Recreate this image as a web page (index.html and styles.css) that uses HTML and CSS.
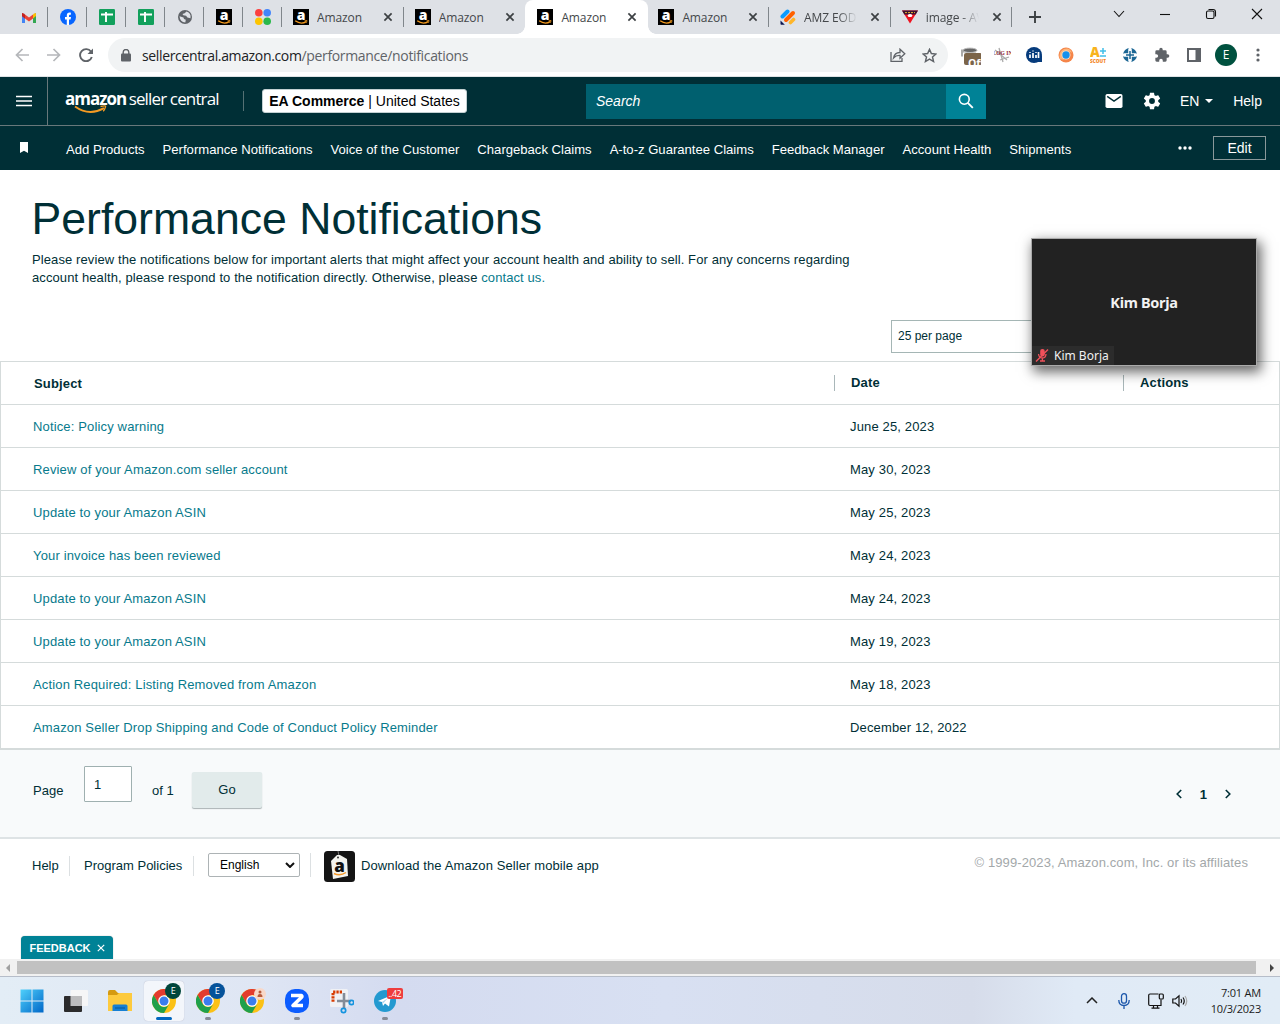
FILE: index.html
```html
<!DOCTYPE html>
<html lang="en">
<head>
<meta charset="utf-8">
<title>Performance Notifications</title>
<link rel="stylesheet" href="styles.css">
</head>
<body>
<svg class="defs" width="0" height="0">
  <symbol id="amz" viewBox="0 0 16 16"><rect width="16" height="16" fill="#000"/><text x="8" y="11" text-anchor="middle" font-family="Open Sans, sans-serif" font-weight="800" font-size="14" fill="#fff">a</text><path d="M2.2 11.8Q8 15.9 13.2 12.6" fill="none" stroke="#f29a1f" stroke-width="1.3"/><path d="M11.6 11.8l2.4-.3-.5 2.2" fill="none" stroke="#f29a1f" stroke-width=".8"/></symbol>
  <symbol id="sheet" viewBox="0 0 16 16"><rect width="16" height="16" rx="1.2" fill="#12a05c"/><path d="M2 5.5h12M7 3v10" stroke="#fff" stroke-width="1.9"/></symbol>
  <symbol id="close" viewBox="0 0 10 10"><path d="M1.4 1.4l7.2 7.2M8.6 1.4L1.4 8.6" stroke="#3c4043" stroke-width="1.7"/></symbol>
  <symbol id="chrome" viewBox="0 0 24 24"><circle cx="12" cy="12" r="12" fill="#fbc116"/><path d="M1.6 6A12 12 0 0 1 22.4 6H12L6.8 15z" fill="#e33b2e"/><path d="M1.6 6A12 12 0 0 0 12 24l5.2-9A6 6 0 0 1 6.8 15z" fill="#1fa04b"/><circle cx="12" cy="12" r="5.8" fill="#fff"/><circle cx="12" cy="12" r="4.5" fill="#3b7ded"/></symbol>
</svg>

<div class="tabs">
  <div class="pin"><svg width="16" height="12" viewBox="0 0 16 12"><path d="M1 2v10h3V5z" fill="#4285f4"/><path d="M15 2v10h-3V5z" fill="#34a853"/><path d="M1 2.2L4 4.5V7.4L1 5z" fill="#c5221f"/><path d="M4 3.5l4 3 4-3v4l-4 3-4-3z" fill="#ea4335"/><path d="M12 3.5l1.3-1Q15 1.500 15 3v2l-3 2.400z" fill="#fbbc04"/><path d="M1 5V3q0-1.500 1.700-.5L4 3.500v3.900z" fill="#c5221f"/></svg></div>
  <div class="pin"><svg width="16" height="16" viewBox="0 0 16 16"><circle cx="8" cy="8" r="8" fill="#0866ff"/><path d="M6.800 16v-5.500H5V8h1.800V6.600c0-2.300 1.300-3.400 4.100-2.900v2c-1.500-.2-1.900.2-1.900 1.200V8h2l-.4 2.500H9V16z" fill="#fff"/></svg></div>
  <div class="pin"><svg width="16" height="16"><use href="#sheet"/></svg></div>
  <div class="pin"><svg width="16" height="16"><use href="#sheet"/></svg></div>
  <div class="pin"><svg width="14" height="14" viewBox="0 0 14 14"><circle cx="7" cy="7" r="7" fill="#5f6368"/><path d="M1.500 6.200l4 1.200.5 1.600 1.800.8-.5 2.700Q2 12 1.500 6.200zM8.500 1.600L6.700 3.200 4.500 4l.8 1.300 2.800.4 1.300 1.800 3.100.8Q13.400 3 8.500 1.600z" fill="#dee1e6"/></svg></div>
  <div class="pin"><svg width="16" height="16"><use href="#amz"/></svg></div>
  <div class="pin"><svg width="16" height="16" viewBox="0 0 16 16"><circle cx="3.800" cy="3.800" r="3.800" fill="#fb4040"/><circle cx="12.200" cy="3.800" r="3.800" fill="#4385fb"/><circle cx="3.800" cy="12.200" r="3.800" fill="#fdc500"/><circle cx="12.200" cy="12.200" r="3.800" fill="#2bb84b"/></svg></div>
  <div class="tab"><svg width="16" height="16"><use href="#amz"/></svg><span>Amazon</span><svg class="x" width="10" height="10"><use href="#close"/></svg></div>
  <div class="tab nosep"><svg width="16" height="16"><use href="#amz"/></svg><span>Amazon</span><svg class="x" width="10" height="10"><use href="#close"/></svg></div>
  <div class="tab active"><svg width="16" height="16"><use href="#amz"/></svg><span>Amazon</span><svg class="x" width="10" height="10"><use href="#close"/></svg></div>
  <div class="tab"><svg width="16" height="16"><use href="#amz"/></svg><span>Amazon</span><svg class="x" width="10" height="10"><use href="#close"/></svg></div>
  <div class="tab"><svg width="16" height="16" viewBox="0 0 16 16"><path d="M2.500 7.500l5-5" stroke="#0a9bff" stroke-width="4" stroke-linecap="round"/><path d="M6 11l7-7" stroke="#ff6100" stroke-width="4" stroke-linecap="round"/><path d="M10.500 13.500l3-3" stroke="#ffb629" stroke-width="3.600" stroke-linecap="round"/><path d="M.5 11.500V15q0 .8.800.8h3.500z" fill="#0a1551"/></svg><span class="fade">AMZ EOD</span><svg class="x" width="10" height="10"><use href="#close"/></svg></div>
  <div class="tab"><svg width="16" height="16" viewBox="0 0 16 16"><path d="M0 1.500h16L8 14.500z" fill="#ee1320"/><path d="M0 1.500h16l-2.300 4H2.300z" fill="#3d1131"/><path d="M3 3.600h10" stroke="#e7b52e" stroke-dasharray="2 1"/><path d="M5.500 6.200Q8 4 10.500 6.200L9.500 8h-3z" fill="#fff"/></svg><span class="fade">image - AV</span><svg class="x" width="10" height="10"><use href="#close"/></svg></div>
  <svg class="plus" width="12" height="12" viewBox="0 0 12 12"><path d="M6 0v12M0 6h12" stroke="#3c4043" stroke-width="1.900"/></svg>
  <div class="winbtns">
    <svg width="12" height="12" viewBox="0 0 12 12"><path d="M1 3l5 5.500L11 3"/></svg>
    <svg width="12" height="12" viewBox="0 0 12 12"><path d="M1 6.500h10"/></svg>
    <svg width="12" height="12" viewBox="0 0 12 12"><rect x="1.500" y="3" width="7.500" height="7.500" rx="1.500"/><path d="M3.500 1.500H8q2.500 0 2.500 2.500v4.500"/></svg>
    <svg width="12" height="12" viewBox="0 0 12 12"><path d="M1 1l10 10M11 1L1 11"/></svg>
  </div>
</div>

<div class="toolbar">
  <div class="navs">
    <svg width="14" height="14" viewBox="0 0 14 14" fill="none" stroke="#b5b7ba" stroke-width="1.700"><path d="M14 7H1.500M7.500 1L1.500 7l6 6"/></svg>
    <svg width="14" height="14" viewBox="0 0 14 14" fill="none" stroke="#b5b7ba" stroke-width="1.700"><path d="M0 7h12.500M6.500 1l6 6-6 6"/></svg>
    <svg width="14" height="14" viewBox="0 0 14 14" fill="none" stroke="#5f6368" stroke-width="1.900"><path d="M12 3.700A6 6 0 1 0 12.800 9"/><path d="M14 .5V6H8.500z" fill="#5f6368" stroke="none"/></svg>
  </div>
  <div class="omnibox">
    <svg width="10" height="13" viewBox="0 0 10 13"><rect x="0" y="4.500" width="10" height="8" rx="1" fill="#5f6368"/><path d="M2.200 5V3.300a2.800 2.800 0 0 1 5.600 0V5" fill="none" stroke="#5f6368" stroke-width="1.400"/></svg>
    <span class="url">sellercentral.amazon.com<i>/performance/notifications</i></span>
    <svg class="share" width="16" height="14" viewBox="0 0 16 14" fill="none" stroke="#5f6368" stroke-width="1.300"><path d="M1 4v9.300h11V10"/><path d="M3.500 10Q4.500 4.500 10 4.500V1.200l4.800 4.600L10 10.200V7.500Q6 7.200 3.500 10z"/></svg>
    <svg width="15" height="15" viewBox="0 0 24 24" fill="none" stroke="#5f6368" stroke-width="2.300"><path d="M12 2.200l3 6.700 7.300.7-5.500 4.800 1.700 7.200-6.500-3.800-6.500 3.800 1.700-7.200L1.700 9.600 9 8.900z"/></svg>
  </div>
  <div class="exts">
    <div class="ext"><svg width="22" height="20" viewBox="0 0 22 20"><path d="M2 4.500h15v3H4v4H2z" fill="#aaa"/><ellipse cx="11" cy="5.300" rx="7" ry="2.200" fill="#666" stroke="#bbb"/><rect x="5" y="8" width="18" height="12" rx="2" fill="#7b6449"/></svg><b class="off">Off</b></div>
    <div class="ext"><svg width="17" height="17" viewBox="0 0 17 17"><path d="M5 1l4 14M1 3l12 10M6 13l9-3" stroke="#aaa" stroke-width="1.300"/><text x="8.500" y="8" text-anchor="middle" font-family="Liberation Serif, serif" font-weight="bold" font-size="5.500" fill="#8d2430">LOG IN</text></svg></div>
    <div class="ext"><svg width="16" height="16" viewBox="0 0 16 16"><circle cx="8" cy="8" r="8" fill="#063b7c"/><path d="M9 15h7v-7z" fill="#063b7c"/><path d="M4 7.500V11M7 6v5M10 8v3M12.500 5v6" stroke="#fff" stroke-width="1.700"/><path d="M4 5v1M7 3.500v1M10 5v1" stroke="#fff" stroke-width="1.400"/></svg></div>
    <div class="ext"><svg width="16" height="16" viewBox="0 0 16 16"><circle cx="8" cy="8" r="7.500" fill="#f58549"/><path d="M2 12Q0 5 6 2q6-2 8 4Q8 2 5 6q-2 3 1 7z" fill="#fcb57a"/><circle cx="8" cy="8" r="4.500" fill="#fbe2c6"/><circle cx="8" cy="8" r="3.700" fill="#1691ec"/></svg></div>
    <div class="ext"><svg width="16" height="16" viewBox="0 0 16 16"><text x="0" y="10" font-family="Open Sans, sans-serif" font-weight="800" font-size="13.500" fill="#f8b31d">A</text><path d="M10 4h6M13 1v6M10 9h6" stroke="#41bfe9" stroke-width="1.500"/><text x="0" y="15.500" textLength="16" lengthAdjust="spacingAndGlyphs" font-family="Open Sans, sans-serif" font-weight="800" font-size="5" fill="#f5881f">SCOUT</text></svg></div>
    <div class="ext"><svg width="16" height="16" viewBox="0 0 16 16"><circle cx="8" cy="8" r="7" fill="#1b6694"/><path d="M8 2.500v11M2.500 8h11" stroke="#fff" stroke-width="3.600" stroke-linecap="round"/><path d="M8 4v8M4 8h8" stroke="#1b6694" stroke-width="1.500"/></svg></div>
    <div class="ext"><svg width="16" height="16" viewBox="0 0 24 24" fill="#5f6368"><path d="M20.500 11H19V7a2 2 0 0 0-2-2h-4V3.500a2.500 2.500 0 0 0-5 0V5H4a2 2 0 0 0-2 2v3.800h1.500a2.700 2.700 0 0 1 0 5.400H2V20a2 2 0 0 0 2 2h3.800v-1.500a2.700 2.700 0 0 1 5.400 0V22H17a2 2 0 0 0 2-2v-4h1.500a2.500 2.500 0 0 0 0-5z"/></svg></div>
    <div class="ext"><svg width="14" height="14" viewBox="0 0 14 14"><rect x="1" y="1" width="12" height="12" fill="none" stroke="#5f6368" stroke-width="2"/><rect x="8.500" y="1" width="5" height="12" fill="#5f6368"/></svg></div>
    <div class="ext"><span class="avatar">E</span></div>
    <div class="ext"><svg width="4" height="14" viewBox="0 0 4 14" fill="#5f6368"><circle cx="2" cy="2" r="1.600"/><circle cx="2" cy="7" r="1.600"/><circle cx="2" cy="12" r="1.600"/></svg></div>
  </div>
</div>

<header class="top">
  <div class="burger"><svg width="16" height="12" viewBox="0 0 16 12"><path d="M0 1.500h16M0 6h16M0 10.500h16" stroke="#fff" stroke-width="1.700"/></svg></div>
  <div class="logo"><span><b>amazon</b> <em>seller central</em></span><svg class="smile" width="34" height="9" viewBox="0 0 34 9"><path d="M1 1.500Q15 11.500 30 3.200" fill="none" stroke="#f59b23" stroke-width="1.900"/><path d="M26.500 1.500q6-1.300 5 .4-.6 2.600-2.300 4.300" fill="none" stroke="#f59b23" stroke-width="1.300"/></svg></div>
  <div class="account"><b>EA Commerce</b> | United States</div>
  <div class="search"><span>Search</span><div class="go"><svg width="16" height="16" viewBox="0 0 16 16" fill="none" stroke="#fff"><circle cx="6.300" cy="6.300" r="4.900" stroke-width="1.600"/><path d="M9.800 9.800l5 5" stroke-width="1.900"/></svg></div></div>
  <div class="tools">
    <svg width="18" height="14" viewBox="0 0 18 14"><rect x=".5" width="17" height="14" rx="1.700" fill="#fff"/><path d="M2.200 2.300L9 7l6.800-4.700" fill="none" stroke="#002f36" stroke-width="1.500"/></svg>
    <svg class="gear" width="20" height="20" viewBox="0 0 24 24"><path fill="#fff" d="M19.430 12.980c.04-.32.070-.64.070-.98s-.03-.66-.07-.98l2.110-1.650c.19-.15.240-.42.120-.64l-2-3.460c-.12-.22-.39-.3-.61-.22l-2.490 1c-.52-.4-1.080-.73-1.690-.98l-.38-2.650C14.460 2.180 14.250 2 14 2h-4c-.25 0-.46.18-.49.42l-.38 2.650c-.61.250-1.170.590-1.690.980l-2.490-1c-.23-.09-.49 0-.61.220l-2 3.460c-.13.220-.07.490.120.640l2.110 1.650c-.04.320-.07.650-.07.980s.03.660.070.980l-2.110 1.650c-.19.150-.24.420-.12.640l2 3.460c.12.220.390.300.610.220l2.490-1c.52.400 1.080.730 1.690.980l.38 2.650c.03.240.240.420.490.420h4c.25 0 .460-.18.490-.42l.38-2.650c.61-.25 1.170-.59 1.690-.98l2.490 1c.23.090.490 0 .610-.22l2-3.460c.12-.22.070-.49-.12-.64l-2.110-1.650zM12 15.500a3.500 3.500 0 1 1 0-7 3.500 3.500 0 0 1 0 7z"/></svg>
    <span class="lang">EN</span><svg class="caret" width="8" height="4" viewBox="0 0 8 4"><path d="M0 0h8L4 4z" fill="#fff"/></svg>
    <span class="help">Help</span>
  </div>
</header>

<nav class="favs">
  <svg class="mark" width="8" height="11" viewBox="0 0 8 11"><path d="M0 0h8v11L4 8.800 0 11z" fill="#fff"/></svg>
  <a>Add Products</a><a>Performance Notifications</a><a>Voice of the Customer</a><a>Chargeback Claims</a><a>A-to-z Guarantee Claims</a><a>Feedback Manager</a><a>Account Health</a><a>Shipments</a>
  <svg class="dots" width="14" height="4" viewBox="0 0 14 4" fill="#fff"><circle cx="2" cy="2" r="1.700"/><circle cx="7" cy="2" r="1.700"/><circle cx="12" cy="2" r="1.700"/></svg>
  <button class="edit">Edit</button>
</nav>

<main>
  <h1>Performance Notifications</h1>
  <p class="intro">Please review the notifications below for important alerts that might affect your account health and ability to sell. For any concerns regarding<br>account health, please respond to the notification directly. Otherwise, please <a>contact us.</a></p>
  <div class="perpage">25 per page</div>
  <div class="table">
    <div class="row head"><span>Subject</span><span>Date</span><span>Actions</span></div>
    <div class="row"><a>Notice: Policy warning</a><span>June 25, 2023</span></div>
    <div class="row"><a>Review of your Amazon.com seller account</a><span>May 30, 2023</span></div>
    <div class="row"><a>Update to your Amazon ASIN</a><span>May 25, 2023</span></div>
    <div class="row"><a>Your invoice has been reviewed</a><span>May 24, 2023</span></div>
    <div class="row"><a>Update to your Amazon ASIN</a><span>May 24, 2023</span></div>
    <div class="row"><a>Update to your Amazon ASIN</a><span>May 19, 2023</span></div>
    <div class="row"><a>Action Required: Listing Removed from Amazon</a><span>May 18, 2023</span></div>
    <div class="row"><a>Amazon Seller Drop Shipping and Code of Conduct Policy Reminder</a><span>December 12, 2022</span></div>
  </div>
  <div class="pager">
    <span class="pg">Page</span><div class="num">1</div><span class="of">of 1</span><div class="gobtn">Go</div>
    <div class="pages">
      <svg width="6" height="10" viewBox="0 0 6 10"><path d="M5.200 1L1.200 5l4 4"/></svg><b>1</b><svg width="6" height="10" viewBox="0 0 6 10"><path d="M.8 1l4 4-4 4"/></svg>
    </div>
  </div>
</main>

<footer>
  <span class="fhelp">Help</span><i class="fsep s1"></i><span class="fpol">Program Policies</span><i class="fsep s2"></i>
  <div class="langsel">English<svg width="10" height="6" viewBox="0 0 10 6"><path d="M1 1l4 4 4-4" fill="none" stroke="#111" stroke-width="2"/></svg></div>
  <i class="fsep s3"></i>
  <svg class="app" width="31" height="31" viewBox="0 0 31 31"><rect width="31" height="31" rx="3.500" fill="#141414"/><path d="M14 0l1 5" stroke="#777"/><path d="M7 10l6-6h3l7 4 1 17-15 3z" fill="#f4f4ef"/><circle cx="14" cy="6.500" r="1" fill="#333"/><text x="15.500" y="21" text-anchor="middle" font-family="Open Sans, sans-serif" font-weight="800" font-size="17" fill="#111">a</text><path d="M10 22.500q6 3 12-1" fill="none" stroke="#f5992a" stroke-width="1.500"/></svg>
  <span class="dl">Download the Amazon Seller mobile app</span>
  <span class="copy">© 1999-2023, Amazon.com, Inc. or its affiliates</span>
</footer>

<div class="fbrow"><div class="feedback">FEEDBACK<svg width="8" height="8" viewBox="0 0 8 8"><path d="M.8.800l6.400 6.400M7.200.800L.8 7.200" stroke="#fff" stroke-width="1.200"/></svg></div></div>
<div class="hscroll"><svg width="4" height="8" viewBox="0 0 4 8"><path d="M4 0v8L0 4z" fill="#a0a0a0"/></svg><div class="thumb"></div><svg width="4" height="8" viewBox="0 0 4 8"><path d="M0 0v8l4-4z" fill="#444"/></svg></div>

<div class="taskbar">
  <div class="task"><svg width="24" height="24" viewBox="0 0 24 24"><defs><linearGradient id="w" x2="1" y2="1"><stop stop-color="#4fd0fb"/><stop offset="1" stop-color="#0067c8"/></linearGradient></defs><path d="M.5.500h11v11H.5zM12.500.500h11v11h-11zM.5 12.500h11v11H.5zM12.500 12.500h11v11h-11z" fill="url(#w)"/></svg></div>
  <div class="task"><svg width="24" height="24" viewBox="0 0 24 24"><rect x="6.500" y="1" width="17.500" height="16" rx="1" fill="#f6f6f7"/><rect x="0" y="7" width="18" height="16" rx="1" fill="#2b2b2c"/><rect x="6.500" y="7" width="11.500" height="10" fill="#bcbcbe"/></svg></div>
  <div class="task"><svg width="26" height="24" viewBox="0 0 26 24"><path d="M1 3q0-2 2-2h5l3 3h12q2 0 2 2v6H1z" fill="#d59a10"/><path d="M1 6h9l2-2h13v18H1z" fill="#fdca3e"/><path d="M5.500 22v-5q0-1.500 1.500-1.500h12q1.500 0 1.500 1.500v5z" fill="#157fd4"/><path d="M8 19h10" stroke="#0b63ad" stroke-width="1.500"/></svg></div>
  <div class="task on"><svg width="24" height="24"><use href="#chrome"/></svg><span class="who green">E</span></div>
  <div class="task dot"><svg width="24" height="24"><use href="#chrome"/></svg><span class="who blue">E</span></div>
  <div class="task"><svg width="24" height="24"><use href="#chrome"/></svg><span class="who guest"><svg width="8" height="8" viewBox="0 0 8 8"><circle cx="4" cy="2" r="1.500" fill="#b65a3a"/><path d="M1.500 7q0-3 2.500-3t2.500 3z" fill="#b65a3a"/></svg></span></div>
  <div class="task dot"><svg width="24" height="24" viewBox="0 0 24 24"><rect width="24" height="24" rx="10" fill="#0b5cff"/><path d="M6 6.500h10.500q.8 1-.2 2L8 16.500h10" fill="none" stroke="#fff" stroke-width="3.600" stroke-linejoin="round"/></svg></div>
  <div class="task"><svg width="26" height="26" viewBox="0 0 26 26"><rect x="2" y="1" width="18" height="18" rx="1.500" fill="#f0f1f5"/><path d="M14 4H5v10" fill="none" stroke="#d83b01" stroke-width="3" stroke-dasharray="2.300 1"/><path d="M9 13h14M16 5v16" stroke="#838c98" stroke-width="2.600"/><circle cx="23.500" cy="14.500" r="2.200" fill="none" stroke="#1494df" stroke-width="1.700"/><circle cx="15.500" cy="22.500" r="2.200" fill="none" stroke="#1494df" stroke-width="1.700"/></svg></div>
  <div class="task dot"><svg width="22" height="22" viewBox="0 0 22 22"><circle cx="11" cy="11" r="11" fill="#2399d0"/><path d="M4 11l13-5.500-2 11-4-3-2 2.500-1-4z" fill="#fff"/><path d="M8 12l6-4-5 5.500z" fill="#a9d3ec"/></svg><span class="count">..42</span></div>
  <div class="tray">
    <svg width="12" height="7" viewBox="0 0 12 7"><path d="M1 6l5-5 5 5" fill="none" stroke="#222" stroke-width="1.500"/></svg>
    <svg class="mic" width="12" height="16" viewBox="0 0 12 16" fill="none" stroke="#1c57ab" stroke-width="1.300"><rect x="3.500" y=".7" width="5" height="9.500" rx="2.500"/><path d="M.8 7Q.8 12.500 6 12.500T11.200 7M6 12.500V16"/></svg>
    <svg class="mon" width="16" height="16" viewBox="0 0 16 16" fill="none" stroke="#111" stroke-width="1.200"><path d="M10.500 1H2Q.7 1 .7 2.300v9q0 1.200 1.300 1.200h11v-6M3.500 15.200h8M5.500 12.500v2.700M9.500 12.500v2.700"/><rect x="11.300" y="1" width="4" height="5" rx="1"/></svg>
    <svg class="spk" width="16" height="14" viewBox="0 0 16 14" fill="none" stroke="#111" stroke-width="1.200"><path d="M.8 5v4h2.700L7 12.200V1.800L3.500 5z"/><path d="M9 5q1.300 2 0 4M11 3.500q2.500 3.500 0 7"/><path d="M13 2q3.500 5 0 10" stroke="#aaa"/></svg>
    <div class="clock"><span>7:01 AM</span><span>10/3/2023</span></div>
  </div>
</div>

<div class="video"><b>Kim Borja</b><div class="name"><svg width="14" height="13" viewBox="0 0 14 13"><rect x="5.200" y="0" width="4.500" height="7.500" rx="2" fill="#f0505a"/><path d="M3.500 5Q4 9 7.400 9T11 5M7.400 9v3M5 12h5" fill="none" stroke="#f0505a" stroke-width="1.300"/><path d="M1 12.500L13 .5" stroke="#f0505a" stroke-width="1.400"/></svg><span>Kim Borja</span></div></div>
</body>
</html>
```
FILE: styles.css
```css
* { box-sizing: border-box; }
body { margin: 0; width: 1280px; height: 1024px; overflow: hidden; position: relative; background: #fff; display: flex; flex-direction: column; font: 13px "Liberation Sans", Arial, sans-serif; color: #002f36; }
.defs { position: absolute; }
svg { display: block; flex: none; }
body > * { flex: none; }

.tabs { height: 34px; background: #dee1e6; display: flex; padding-left: 9px; font: 12px "Open Sans", sans-serif; color: #44474a; align-items: stretch; }
.pin { width: 39px; display: flex; align-items: center; justify-content: center; background: linear-gradient(#80868b, #80868b) right 7px / 1px 20px no-repeat; }
.tab { width: 121.700px; display: flex; align-items: center; padding-left: 11px; background: linear-gradient(#80868b, #80868b) right 7px / 1px 20px no-repeat; }
.tab.nosep { background: none; }
.tab.active { background: #fff; border-radius: 8px 8px 0 0; position: relative; width: 123px; padding-left: 12px; margin-right: -1px; background: #fff; }
.tab.active::before, .tab.active::after { content: ""; position: absolute; bottom: 0; width: 8px; height: 8px; }
.tab.active::before { left: -8px; background: radial-gradient(circle at 0 0, transparent 7.500px, #fff 8px); }
.tab.active::after { right: -8px; background: radial-gradient(circle at 100% 0, transparent 7.500px, #fff 8px); }
.tab span { margin-left: 8px; width: 56px; white-space: nowrap; overflow: hidden; letter-spacing: -.1px; }
.tab .fade { width: 53px; margin-right: 3px; -webkit-mask-image: linear-gradient(90deg, #000 65%, transparent); mask-image: linear-gradient(90deg, #000 65%, transparent); }
.tab .x { margin-left: 10px; }
.plus { margin: 11px 0 0 17px; }
.winbtns { display: flex; gap: 34px; margin: 8px 17px 0 auto; fill: none; stroke: #111; stroke-width: 1.100; }

.toolbar { height: 43px; display: flex; align-items: center; border-bottom: 1px solid #dfe3e5; }
.navs { display: flex; gap: 18px; padding-left: 15px; width: 108px; }
.omnibox { width: 840px; height: 34px; border-radius: 17px; background: #f1f3f4; display: flex; align-items: center; padding: 0 11px 0 13px; }
.url { margin-left: 11px; font: 14px "Open Sans", sans-serif; color: #202124; letter-spacing: -.35px; }
.url i { font-style: normal; color: #5f6368; }
.share { margin: 0 16px 0 auto; }
.exts { display: flex; flex: 1; align-items: center; padding-left: 6px; }
.ext { width: 32px; height: 26px; display: flex; align-items: center; justify-content: center; position: relative; }
.off { position: absolute; left: 14px; top: 14px; font: bold 10.500px/14px "Open Sans", sans-serif; color: #fff; }
.avatar { width: 22px; height: 22px; border-radius: 50%; background: #00513f; color: #fff; font: 12px/22px "Open Sans", sans-serif; text-align: center; }

.top { height: 49px; background: #002f36; border-bottom: 1px solid #68787b; display: flex; align-items: center; color: #fff; }
.burger { width: 48px; height: 48px; border-right: 1px solid #68787b; display: flex; align-items: center; padding-left: 16px; }
.logo { width: 196px; height: 20px; margin-left: 0; padding-left: 17px; position: relative; border-right: 1px solid #557174; white-space: nowrap; font: 17px/16px "Open Sans", sans-serif; }
.logo b { letter-spacing: -1px; }
.logo em { font-style: normal; font-weight: 400; letter-spacing: -.85px; margin-left: -2px; }
.smile { position: absolute; left: 26px; top: 14px; }
.account { width: 205px; height: 24px; margin-left: 18px; background: #fff; color: #000; border: 1px solid #c3d0d2; border-radius: 3px; font-size: 14px; line-height: 22px; text-align: center; white-space: nowrap; }
.search { margin-left: 119px; width: 400px; height: 35px; background: #00606f; display: flex; align-items: center; font-size: 14px; font-style: italic; padding-left: 10px; }
.go { margin-left: auto; width: 40px; height: 35px; background: #008296; display: flex; align-items: center; justify-content: center; }
.tools { flex: 1; display: flex; align-items: center; padding-left: 119px; font-size: 14px; }
.gear { margin-left: 19px; }
.lang { margin-left: 18px; }
.caret { margin-left: 6px; }
.help { margin-left: auto; margin-right: 18px; }

.favs { height: 44px; background: #002f36; color: #fff; display: flex; align-items: center; font-size: 13.100px; white-space: nowrap; }
.favs a { margin-right: 18px; padding-top: 2px; }
.mark { margin: 0 38px 2px 20px; }
.dots { margin-left: auto; }
.edit { width: 53px; height: 24px; margin: 0 14px 0 21px; background: none; border: 1px solid #8a989a; color: #fff; font: 14px "Liberation Sans", sans-serif; padding: 0; }

main { height: 669px; }
h1 { margin: 0; padding: 23px 0 0 31.500px; font-size: 44.600px; line-height: 52px; font-weight: 400; height: 81px; }
.intro { margin: 0; padding-left: 32px; height: 69px; line-height: 18px; letter-spacing: .1px; white-space: nowrap; }
a { color: #077a8c; }
.favs a { color: #fff; }
.perpage { margin-left: 891px; width: 357px; height: 33px; border: 1px solid #a5b6b5; padding-left: 6px; font-size: 12px; line-height: 30px; }
.table { margin-top: 8px; border: 1px solid #d5dbdb; border-top-width: 1px; }
.row { height: 43px; display: grid; grid-template-columns: 817px 289px 1fr; padding-left: 32px; align-items: center; border-bottom: 1px solid #d5dbdb; letter-spacing: .15px; }
.row.head { font-weight: bold; padding-left: 33px; }
.row.head span + span { margin-left: -17px; padding-left: 16px; border-left: 1px solid #a9b7b9; height: 16px; line-height: 16px; }
.pager { height: 89px; background: #f8fafb; border-bottom: 2px solid #dee3e5; display: flex; padding-left: 33px; margin-top: 0; }
.pg { width: 51px; padding-top: 33px; }
.num { width: 48px; height: 36px; margin-top: 16px; border: 1px solid #9fb0b0; background: #fff; padding: 10px 0 0 9px; border-radius: 1px; }
.of { width: 60px; padding: 33px 0 0 20px; }
.gobtn { width: 70px; height: 36px; margin-top: 22px; background: #e2ebeb; border-radius: 2px; box-shadow: 0 1px 1px #aab2b4; text-align: center; line-height: 35px; }
.pages { margin: 38px 49px 0 auto; display: flex; height: 12px; gap: 18px; align-items: center; fill: none; stroke: #002f36; stroke-width: 1.600; }

footer { height: 97px; display: flex; align-items: flex-start; padding: 0 32px; position: relative; }
.fhelp, .fpol, .dl { margin-top: 19px; }
.fhelp { width: 37px; }
.fsep { width: 1px; height: 20px; margin-top: 17px; background: #dce0e2; }
.s1 { margin-right: 14px; }
.fpol { width: 109px; white-space: nowrap; }
.s2 { margin-right: 14px; }
.s3 { margin: 14px 13px 0 10px; height: 24px; }
.langsel { width: 92px; height: 24px; margin-top: 14px; border: 1px solid #adb3b5; border-radius: 2px; color: #000; display: flex; align-items: center; justify-content: space-between; padding: 0 4px 0 11px; font-size: 12px; }
.app { margin-top: 12px; }
.dl { margin-left: 6px; letter-spacing: .1px; }
.copy { margin: 16px 0 0 auto; color: #a3a8aa; letter-spacing: .1px; }

.fbrow { height: 23px; padding-left: 21px; }
.feedback { width: 92px; height: 23px; background: #008296; color: #fff; border-radius: 4px 4px 0 0; box-shadow: 0 0 1px #888; font-size: 11px; font-weight: bold; display: flex; align-items: center; justify-content: center; gap: 6px; }
.hscroll { height: 17px; background: #f1f1f1; display: flex; align-items: center; padding: 0 6px 0 6px; justify-content: space-between; }
.thumb { width: 1239px; height: 13px; background: #c1c1c1; margin: 0 10px 0 3px; }

.taskbar { height: 48px; border-top: 1px solid #b6bdc9; background: linear-gradient(90deg, #e3edf6 0, #dfe6f4 20%, #d4dbf0 31%, #d8e0f2 52%, #d6dcea 76%, #e0eaf6 84%, #e1ecf6 100%); display: flex; align-items: center; padding-left: 12px; }
.task { width: 40px; height: 40px; margin-right: 4.100px; display: flex; align-items: center; justify-content: center; position: relative; }
.task.on { background: #f3f6fb; border-radius: 4px; box-shadow: 0 0 1px #aab; }
.task.on::after, .task.dot::after { content: ""; position: absolute; bottom: 1px; left: 17px; width: 6px; height: 3px; border-radius: 2px; background: #858a96; }
.task.on::after { left: 12px; width: 16px; background: #0067c0; }
.who { position: absolute; left: 21px; top: 2px; width: 16px; height: 16px; border-radius: 50%; color: #fff; font: 9px/16px "Open Sans", sans-serif; text-align: center; }
.green { background: #00463b; }
.blue { background: #05529a; }
.guest { background: #f8d8c9; width: 12px; height: 12px; left: 22px; top: 7px; display: flex; align-items: center; justify-content: center; }
.count { position: absolute; left: 22px; top: 7px; width: 16px; height: 11px; background: #ee3d3d; border-radius: 2px; color: #fff; font: 9px/11px "Open Sans", sans-serif; text-align: center; letter-spacing: -.5px; }
.tray { margin-left: auto; display: flex; align-items: center; padding-right: 19px; }
.mic { margin-left: 20px; }
.mon { margin-left: 18px; }
.spk { margin-left: 8px; }
.clock { width: 73px; display: flex; flex-direction: column; text-align: right; font: 11px/16px "Open Sans", sans-serif; color: #1b1b1b; letter-spacing: -.2px; }

.video { position: absolute; left: 1031px; top: 238px; width: 226px; height: 128px; background: #222; border: 1px solid #aaa; box-shadow: 3px 5px 12px 1px rgba(0,0,0,.6); color: #f2f2f2; font: 12px "Noto Sans", sans-serif; display: flex; align-items: center; justify-content: center; }
.video b { font-size: 14.500px; letter-spacing: -.3px; }
.name { position: absolute; left: 0; bottom: 0; width: 82px; height: 19px; background: #2c2c2c; display: flex; align-items: center; gap: 5px; padding-left: 3px; white-space: nowrap; }
```
